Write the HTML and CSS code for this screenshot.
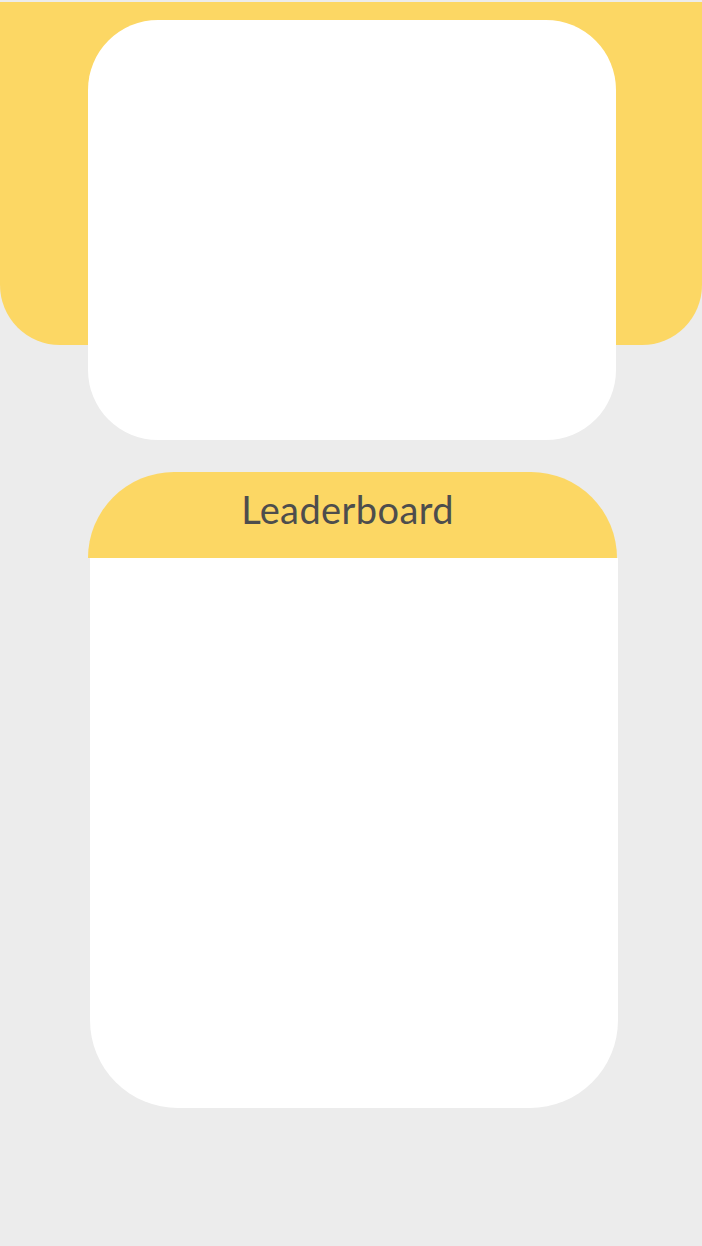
FILE: index.html
```html
<!DOCTYPE html>
<html lang="en">
<head>
<meta charset="utf-8">
<title>Leaderboard</title>
<link rel="stylesheet" href="styles.css">
</head>
<body>
  <div class="page">
    <header class="hero"></header>
    <section class="profile-card"></section>
    <section class="board">
      <div class="board-head"><h2 class="board-title">Leaderboard</h2></div>
      <div class="board-body"></div>
    </section>
  </div>
</body>
</html>
```
FILE: styles.css
```css
html, body {
  margin: 0;
  padding: 0;
  background: #ececec;
}
body {
  font-family: Lato, "Open Sans", sans-serif;
  width: 702px;
  height: 1246px;
  overflow: hidden;
}
.page {
  padding-top: 2px;
  display: flex;
  flex-direction: column;
}
.hero {
  height: 343px;
  background: #fcd764;
  border-radius: 0 0 60px 60px;
}
.profile-card {
  margin: -325px 0 0 88px;
  width: 528px;
  height: 420px;
  background: #ffffff;
  border-radius: 70px;
}
.board {
  margin: 32px 0 0 88px;
  width: 530px;
  display: flex;
  flex-direction: column;
}
.board-head {
  width: 529px;
  height: 86px;
  background: #fcd764;
  border-radius: 86px 86px 0 0;
  display: flex;
  justify-content: center;
  align-items: center;
}
.board-title {
  margin: 0;
  font-weight: 400;
  font-size: 38px;
  line-height: 1.2;
  color: #4d4d4d;
  letter-spacing: 0.4px;
  padding-right: 10px;
  padding-bottom: 10px;
}
.board-body {
  margin-left: 2px;
  width: 528px;
  height: 550px;
  background: #ffffff;
  border-radius: 0 0 88px 88px;
}
```
